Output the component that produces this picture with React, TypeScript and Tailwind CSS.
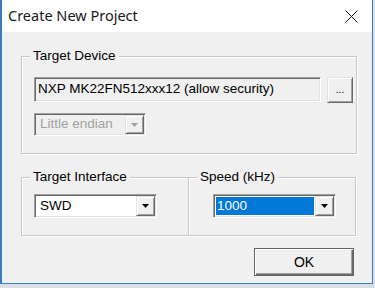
const SUNKEN =
  'border border-t-[#a0a0a0] border-l-[#a0a0a0] border-b-white border-r-white shadow-[inset_1px_1px_0_#696969,inset_-1px_-1px_0_#e3e3e3]'
const RAISED =
  'border border-t-[#e3e3e3] border-l-[#e3e3e3] border-b-[#696969] border-r-[#696969] shadow-[inset_1px_1px_0_#fff,inset_-1px_-1px_0_#a0a0a0]'

function DownArrow({ disabled = false }: { disabled?: boolean }) {
  return (
    <svg width="7" height="4" viewBox="0 0 7 4">
      <path d="M0 0h7L3.5 4z" fill={disabled ? '#a0a0a0' : '#000'} />
    </svg>
  )
}

function Combo({
  value,
  width,
  disabled = false,
  selected = false,
}: {
  value: string
  width: string
  disabled?: boolean
  selected?: boolean
}) {
  return (
    <div className={`${SUNKEN} ${width} h-full flex p-[1px] ${disabled ? 'bg-[#f0f0f0]' : 'bg-white'}`}>
      <div
        className={`flex-1 flex items-center ${
          selected ? 'bg-[#0078d7] text-white pl-[1px] m-[1px]' : 'pl-[4px]'
        } ${disabled ? 'text-[#a0a0a0]' : ''}`}
      >
        {value}
      </div>
      <div className={`${RAISED} w-[19px] h-full flex items-center justify-center bg-[#f0f0f0]`}>
        <DownArrow disabled={disabled} />
      </div>
    </div>
  )
}

function Group({
  label,
  className,
  children,
}: {
  label: string
  className: string
  children: React.ReactNode
}) {
  return (
    <div
      className={`relative border border-[#c8c8c8] shadow-[1px_1px_0_#fff,inset_1px_1px_0_#fff] ${className}`}
    >
      <span className="absolute -top-[9px] left-[8px] px-[3px] bg-[#f0f0f0] leading-[16px] text-black">
        {label}
      </span>
      {children}
    </div>
  )
}

export default function App() {
  return (
    <div className="w-[375px] h-[288px] bg-[#d9dfe6] overflow-hidden">
      <div className="w-[373px] h-[284px] border-l-2 border-r border-b border-[#3b7cc0] flex flex-col">
        {/* title bar */}
        <div className="h-[32px] bg-white flex items-center justify-between pl-[6px] pr-[14px]">
          <span className="text-[14.5px] text-[#1a1a1a]" style={{ fontFamily: '"Noto Sans", sans-serif' }}>
            Create New Project
          </span>
          <svg width="13" height="13" viewBox="0 0 13 13">
            <path d="M0.5 0.5l12 12M12.5 0.5l-12 12" stroke="#111" strokeWidth="1" />
          </svg>
        </div>

        {/* body */}
        <div
          className="flex-1 bg-[#f0f0f0] pl-[19px] text-[13.5px] text-black"
          style={{ fontFamily: '"Liberation Sans", Arial, sans-serif' }}
        >
          <Group label="Target Device" className="mt-[24px] w-[336px] h-[98px] pl-[12px] pt-[20px]">
            <div className="flex gap-[6px] items-start">
              <div className={`${SUNKEN} w-[287px] h-[25px] bg-[#f0f0f0] flex items-center pl-[3px]`}>
                NXP MK22FN512xxx12 (allow security)
              </div>
              <button
                className={`${RAISED} w-[26px] h-[26px] bg-[#f0f0f0] flex items-end justify-center pb-[7px] text-[10px] leading-none`}
              >
                ...
              </button>
            </div>
            <div className="mt-[10px] h-[23px]">
              <Combo value="Little endian" width="w-[112px]" disabled />
            </div>
          </Group>

          <div className="mt-[23px] flex">
            <Group label="Target Interface" className="w-[167px] h-[59px] border-r-0 pl-[12px] pt-[16px]">
              <div className="h-[24px]">
                <Combo value="SWD" width="w-[123px]" />
              </div>
            </Group>
            <Group label="Speed (kHz)" className="w-[168px] h-[59px] pl-[24px] pt-[16px]">
              <div className="h-[24px]">
                <Combo value="1000" width="w-[123px]" selected />
              </div>
            </Group>
          </div>

          <div className="w-[333px] mt-[12px] flex justify-end">
            <button className="w-[100px] h-[28px] border border-[#646464] bg-[#f0f0f0] shadow-[inset_1px_1px_0_#fff,inset_-1px_-1px_0_#696969,inset_-2px_-2px_0_#a0a0a0] text-[14px] flex items-center justify-center pt-[1px]">
              OK
            </button>
          </div>
        </div>
      </div>
    </div>
  )
}
